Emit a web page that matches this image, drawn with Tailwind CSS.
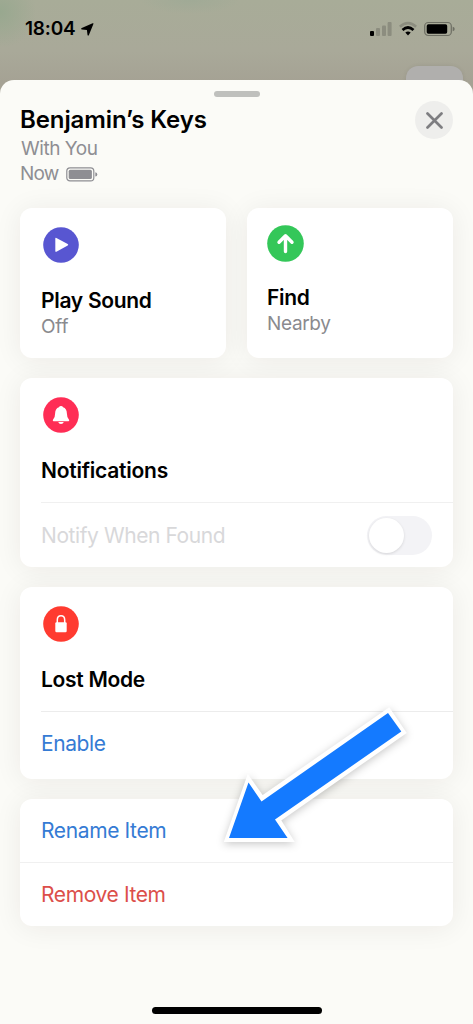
<!DOCTYPE html>
<html lang="en">
<head>
<meta charset="utf-8">
<meta name="viewport" content="width=device-width, initial-scale=1">
<title>Benjamin’s Keys</title>
<script src="https://cdn.jsdelivr.net/npm/@tailwindcss/browser@4"></script>
</head>
<body class="relative flex h-[1024px] w-[473px] flex-col overflow-hidden bg-linear-to-b from-[#a8ac98] via-[#a9a999] via-5% to-[#a5a294] to-8% font-['Inter','Noto_Sans',sans-serif] text-black">
  <!-- Status bar -->
  <header class="relative flex h-[80px] shrink-0 items-start justify-between bg-[radial-gradient(circle_at_0_12px,#98a88f_0,transparent_36px),radial-gradient(ellipse_at_190px_0,#a0aa96_0,transparent_50px)] pt-[18px] pr-[18px] pl-[25px]">
    <div class="flex items-center gap-[5px]">
      <span class="w-[51px] text-[19px] leading-[22px] font-semibold tracking-[-0.2px] whitespace-nowrap">18:04</span>
      <svg class="h-[13px] w-[13px]" viewBox="0 0 13 13"><path d="M.8 4.900 11.600.3q1.200-.4.800.8L7.900 11.900q-.9 1.600-1.400-.1L5.900 7 1 6.500Q-.8 5.900.8 4.900Z"/></svg>
    </div>
    <div class="mt-[3px] flex items-center">
      <svg class="h-[16px] w-[22px]" viewBox="0 0 22 16"><rect x="0" y="10" width="4" height="5" rx="1"/><g fill="#8c8d7f"><rect x="6" y="7" width="4" height="8" rx="1"/><rect x="12" y="4.500" width="4" height="10.500" rx="1"/><rect x="17.600" y="1" width="4" height="14" rx="1"/></g></svg>
      <svg class="ml-[7px] h-[16px] w-[18px]" viewBox="0 0 18 16" fill="none" stroke-width="2.700"><path d="M.9 5.800Q9-1.500 17.100 5.800" stroke="#8c8d7f"/><path d="M3.500 9Q9 4 14.500 9" stroke="#000"/><path d="M6.300 11.500Q9 9.500 11.700 11.500L9 14.500Z" fill="#000"/></svg>
      <svg class="ml-[7px] h-[16px] w-[31px]" viewBox="0 0 31 16"><rect x=".7" y="1.500" width="26.600" height="13" rx="3.600" fill="none" stroke="#6d6e63" stroke-width="1.200"/><rect x="2.700" y="3.300" width="20.500" height="9.500" rx="1.700"/><path d="M28.700 5.800q2 .5 2 2.200t-2 2.200Z" fill="#6d6e63"/></svg>
    </div>
    <div class="absolute top-[66px] left-[406px] h-[30px] w-[57px] rounded-[12px] bg-[#b0afad] shadow-[0_0_4px_rgba(0,0,0,.08)]"></div>
  </header>

  <!-- Item sheet -->
  <main class="relative flex grow flex-col rounded-t-[14px] bg-[#fbfbf7] px-5 pt-[11px]">
    <div class="mx-auto h-[6px] w-[46px] rounded-full bg-[#bfc0bd]"></div>
    <div class="flex h-[111px] justify-between pt-[4px]">
      <div>
        <h1 class="h-[34px] pt-[2px] text-[24px] leading-[34px] font-semibold tracking-[-0.1px] whitespace-nowrap">Benjamin’s Keys</h1>
        <p class="mt-[1px] h-[25px] pl-[1px] text-[19px] leading-[25px] tracking-[-0.45px] text-[#8e8e93]">With You</p>
        <div class="flex items-center text-[19px] leading-[26px] tracking-[-0.8px] text-[#8e8e93]"><span class="w-[46px]">Now</span>
          <svg class="h-[15px] w-[32px]" viewBox="0 0 32 15"><rect x=".8" y=".9" width="27" height="13" rx="3.200" fill="none" stroke="#8e8e93" stroke-width="1.200"/><rect x="2.700" y="2.800" width="23.200" height="9.200" rx="1.500" fill="#8e8e93"/><path d="M29.300 5.200q2 .5 2 2.200t-2 2.200Z" fill="#8e8e93"/></svg>
        </div>
      </div>
      <button aria-label="Close" class="flex h-[38px] w-[38px] items-center justify-center rounded-full bg-[#eeeeec]">
        <svg class="h-[17px] w-[17px]" viewBox="0 0 17 17" fill="none" stroke="#7e7e81" stroke-width="2.700" stroke-linecap="round"><path d="m1.500 1.500 14 14M15.500 1.500l-14 14"/></svg>
      </button>
    </div>

    <div class="flex flex-col gap-[20px]">
      <div class="grid h-[150px] grid-cols-2 gap-[21px]">
        <section class="rounded-[12px] bg-white px-[21px] pt-[19px] shadow-[0_2px_28px_rgba(40,30,35,.07)]">
          <svg class="ml-[2px] h-[36px] w-[36px]" viewBox="0 0 36 36"><circle cx="18" cy="18" r="17.800" fill="#5856d1"/><path d="M12.300 11.700q0-1.200 1.100-.7l11.300 6.100q1.100.7 0 1.400l-11.300 6.200q-1.100.5-1.100-.7Z" fill="#fff"/></svg>
          <h2 class="mt-[24px] text-[21px] leading-[27px] font-semibold tracking-[-0.3px] whitespace-nowrap">Play Sound</h2>
          <p class="text-[19px] leading-[25px] tracking-[-0.2px] text-[#8a8a8e]">Off</p>
        </section>
        <section class="rounded-[12px] bg-white px-[20px] pt-[17px] shadow-[0_2px_28px_rgba(40,30,35,.07)]">
          <svg class="h-[37px] w-[37px]" viewBox="0 0 37 37"><circle cx="18.500" cy="18.500" r="18.300" fill="#34c759"/><path d="M18.500 26.500V11M12 17.200l6.500-6.500 6.500 6.500" fill="none" stroke="#fff" stroke-width="3.400" stroke-linecap="round" stroke-linejoin="round"/></svg>
          <h2 class="mt-[22px] text-[21px] leading-[27px] font-semibold tracking-[-0.3px] whitespace-nowrap">Find</h2>
          <p class="text-[19px] leading-[25px] tracking-[-0.35px] text-[#8a8a8e]">Nearby</p>
        </section>
      </div>

      <section class="h-[189px] rounded-[12px] bg-white pl-[21px] shadow-[0_2px_28px_rgba(40,30,35,.07)]">
        <div class="h-[125px] border-b-[1.500px] border-[#f0f0f0] pt-[19px]">
          <svg class="ml-[2px] h-[36px] w-[36px]" viewBox="0 0 36 36"><circle cx="18" cy="18" r="17.800" fill="#ff2d55"/><path d="M10.400 24.200q-1.200-.3-.3-1.600 2-2 2-6.100.1-5 3.800-6.200Q16.500 9 18 9t2.100 1.300q3.700 1.200 3.800 6.200 0 4.100 2 6.100.9 1.300-.3 1.600ZM15.200 25h5.600q-.7 1.900-2.800 1.900T15.200 25Z" fill="#fff"/></svg>
          <h2 class="mt-[24px] text-[21px] leading-[27px] font-semibold tracking-[-0.23px]">Notifications</h2>
        </div>
        <div class="flex h-[64px] items-center justify-between pr-[21px] text-[21px] tracking-[-0.42px] text-[#d8d8da]">
          <span class="pt-[1px]">Notify When Found</span>
          <span class="flex h-[39px] w-[65px] items-center rounded-full bg-[#f3f3f6] pl-[2px]"><span class="h-[35px] w-[35px] rounded-full bg-white shadow-[0_1px_3px_rgba(0,0,0,.12)]"></span></span>
        </div>
      </section>

      <section class="h-[192px] rounded-[12px] bg-white pl-[21px] shadow-[0_2px_28px_rgba(40,30,35,.07)]">
        <div class="h-[125px] border-b border-[#ececec] pt-[19px]">
          <svg class="ml-[2px] h-[36px] w-[36px]" viewBox="0 0 36 36"><circle cx="18" cy="18" r="17.800" fill="#ff3b30"/><rect x="12.300" y="16.200" width="11.400" height="10" rx="1.200" fill="#fff"/><path d="M14.300 17v-3q0-4.200 3.700-4.200t3.700 4.200v3" fill="none" stroke="#fff" stroke-width="1.500"/></svg>
          <h2 class="mt-[24px] text-[21px] leading-[27px] font-semibold tracking-[-0.3px]">Lost Mode</h2>
        </div>
        <div class="flex h-[64px] items-center text-[21px] tracking-[-0.4px] text-[#357bd4]">Enable</div>
      </section>

      <section class="h-[127px] rounded-[12px] bg-white shadow-[0_2px_28px_rgba(40,30,35,.07)]">
        <div class="flex h-[64px] items-center border-b-[1.500px] border-[#f0f0f0] pt-px pl-[21px] text-[21px] tracking-[-0.38px] text-[#357bd4]">Rename Item</div>
        <div class="flex h-[63px] items-center pt-px pl-[21px] text-[21px] tracking-[-0.38px] text-[#dc4f4a]">Remove Item</div>
      </section>
    </div>
    <div class="mx-auto mt-auto mb-[10px] h-[7px] w-[170px] shrink-0 rounded-full bg-black"></div>
  </main>

  <!-- Pointer arrow laid over the cards -->
  <svg class="absolute top-[690px] left-[200px] h-[170px] w-[240px] drop-shadow-[0_2px_4px_rgba(0,0,0,.22)]" viewBox="0 0 240 170"><path d="M27.300 149.500 48.500 89.500 62 108.500 188.600 20.800 203.300 42.300 78 129.800 90.300 149.500Z" fill="#fff" stroke="#fff" stroke-width="5"/><path d="M29 148 48.500 92.500 61.500 111.500 188 23 201.300 41.500 75 129.500 87.600 148Z" fill="#147aff"/></svg>
</body>
</html>
